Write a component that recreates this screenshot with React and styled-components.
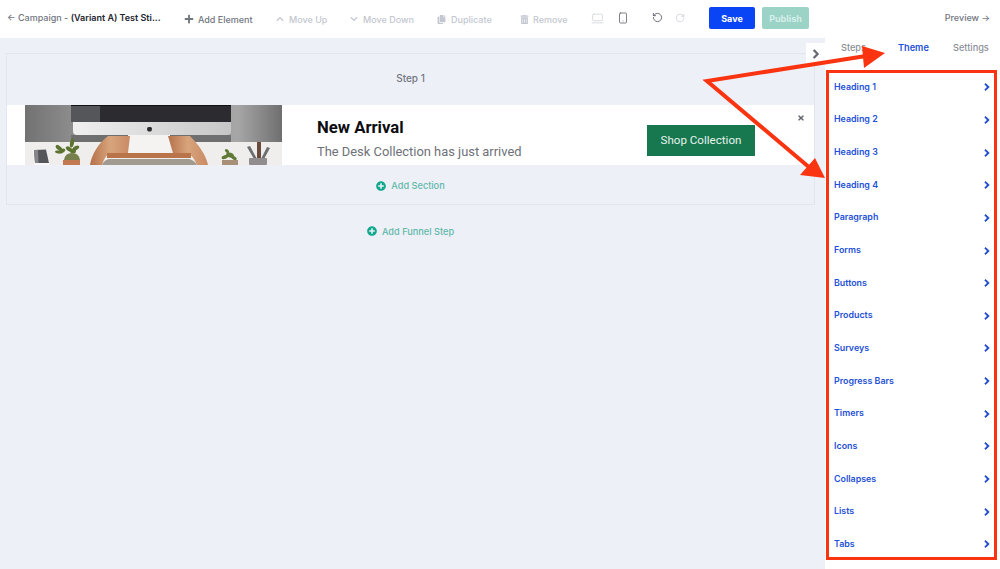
import React from 'react';
import styled, { createGlobalStyle } from 'styled-components';
import { FaPlus, FaChevronUp, FaChevronDown, FaCopy, FaTrashAlt, FaChevronRight, FaTimes, FaPlusCircle } from 'react-icons/fa';
import { LaptopMinimal, Smartphone, RotateCcw, RotateCw } from 'lucide-react';

const GlobalStyle = createGlobalStyle`
  * { box-sizing: border-box; }
  html, body { margin: 0; padding: 0; height: 100%; background: #eef0f8; }
  body { font-family: Inter, "Liberation Sans", sans-serif; }
`;

const Page = styled.div`
  position: relative;
  width: 1000px;
  height: 569px;
  overflow: hidden;
  display: flex;
  flex-direction: column;
`;

const Toolbar = styled.header`
  height: 38px;
  flex: none;
  display: flex;
  align-items: center;
  padding-left: 7px;
  background: #fff;
  font-size: 9px;
  font-weight: 500;
  color: #71767f;
`;

const Title = styled.div`
  width: 177px;
  flex: none;
  font-size: 9px;
  white-space: nowrap;
  padding-bottom: 3px;
  b { font-weight: 600; color: #23262d; }
`;

const Tool = styled.div`
  width: ${p => p.$w}px;
  flex: none;
  display: flex;
  align-items: center;
  gap: ${p => p.$gap ?? 4}px;
  color: ${p => (p.$off ? '#c3c7d0' : '#71767f')};
  white-space: nowrap;
  padding-bottom: ${p => p.$pb ?? 0}px;
`;

const Button = styled.button`
  width: ${p => p.$w}px;
  height: 22px;
  flex: none;
  margin: 0 7px 2px 0;
  padding: 0;
  border: 0;
  border-radius: 2px;
  background: ${p => p.$bg};
  color: ${p => p.$fg};
  font: 700 9px Inter, sans-serif;
`;

const Preview = styled.div`
  margin-left: auto;
  padding: 0 10px 3px 0;
  font-size: 9px;
`;

const Body = styled.div`
  flex: 1;
  display: flex;
  min-height: 0;
`;

const Canvas = styled.main`
  flex: 1;
  padding: 15px 10px 0 6px;
`;

const StepBox = styled.section`
  height: 152px;
  border: 1px solid #e3e5ee;
  display: flex;
  flex-direction: column;
`;

const StepLabel = styled.div`
  height: 51px;
  flex: none;
  padding-top: 18px;
  text-align: center;
  font-size: 10px;
  font-weight: 500;
  color: #72767f;
`;

const Banner = styled.div`
  position: relative;
  height: 60px;
  flex: none;
  display: flex;
  background: #fff;
  padding-left: 18px;
  overflow: hidden;
`;

const BannerCopy = styled.div`
  margin-left: 35px;
  padding-top: 12px;
  width: 330px;
  flex: none;
  font-family: Roboto, sans-serif;
`;

const BannerTitle = styled.div`
  font-size: 16.7px;
  line-height: 22px;
  font-weight: 700;
  color: #0c0d10;
`;

const BannerText = styled.div`
  margin-top: 3px;
  font-size: 12.9px;
  line-height: 20px;
  color: #6e7178;
`;

const ShopButton = styled.button`
  width: 108px;
  height: 31px;
  margin-top: 20px;
  padding: 0 0 2px;
  border: 0;
  background: #17784f;
  color: #e9f3ee;
  font: 400 11.6px Roboto, sans-serif;
`;

const CloseIcon = styled(FaTimes)`
  position: absolute;
  top: 9px;
  right: 9px;
  color: #62656c;
`;

const AddRow = styled.div`
  height: ${p => p.$h}px;
  display: flex;
  align-items: center;
  justify-content: center;
  gap: 5px;
  padding-top: ${p => p.$pt ?? 0}px;
  font-size: 9.2px;
  font-weight: 500;
  color: #5fb8a8;
  svg { color: #12a88c; }
`;

const Sidebar = styled.aside`
  position: relative;
  width: 175px;
  flex: none;
  background: #fff;
`;

const Collapse = styled.div`
  position: absolute;
  top: 5px;
  left: -19px;
  width: 19px;
  height: 22px;
  display: flex;
  align-items: center;
  justify-content: center;
  background: #fff;
  color: #62656c;
  svg { stroke: currentColor; stroke-width: 40; }
`;

const Tabs = styled.nav`
  height: 32px;
  display: flex;
  align-items: flex-start;
  padding-top: 4px;
  font-size: 9.2px;
  font-weight: 500;
  color: #8b8f98;
`;

const Tab = styled.div`
  width: ${p => p.$w}px;
  padding-left: ${p => p.$pl ?? 0}px;
  color: ${p => (p.$active ? '#2350d8' : 'inherit')};
  font-weight: ${p => (p.$active ? 600 : 500)};
`;

const List = styled.ul`
  list-style: none;
  margin: 0;
  padding: 0 9px 0 9px;
`;

const Row = styled.li`
  height: 32.65px;
  display: flex;
  align-items: center;
  justify-content: space-between;
  font-size: 8.9px;
  font-weight: 600;
  color: #2350d8;
  svg { color: #1440c8; margin-top: 2px; stroke: currentColor; stroke-width: 50; }
`;

const Annotations = styled.svg`
  position: absolute;
  inset: 0;
  pointer-events: none;
`;

const Leaves = ({ dots, fill }) => (
  <g fill={fill}>
    {dots.map(([x, y, rx, ry, r], i) => (
      <ellipse key={i} cx={x} cy={y} rx={rx} ry={ry} transform={`rotate(${r} ${x} ${y})`} />
    ))}
  </g>
);

const DeskPhoto = () => (
  <svg width="257" height="60" viewBox="0 0 257 60" style={{ flex: 'none' }}>
    <defs>
      <linearGradient id="wall" x1="0" x2="1" y1="0" y2="0">
        <stop offset="0" stopColor="#727272" />
        <stop offset="0.18" stopColor="#8c8c8c" />
        <stop offset="0.83" stopColor="#a6a6a6" />
        <stop offset="1" stopColor="#6f6f6f" />
      </linearGradient>
      <linearGradient id="wood" x1="0" x2="1" y1="0" y2="0">
        <stop offset="0" stopColor="#b5714a" />
        <stop offset="0.5" stopColor="#d8a47c" />
        <stop offset="1" stopColor="#c98a64" />
      </linearGradient>
      <linearGradient id="chin" x1="0" x2="1" y1="0" y2="0">
        <stop offset="0" stopColor="#f0f0f0" />
        <stop offset="1" stopColor="#c6c6c6" />
      </linearGradient>
    </defs>
    <rect width="257" height="37" fill="url(#wall)" />
    <rect y="30" x="46" width="160" height="7" fill="#6f6f6f" />
    <rect y="37" width="257" height="23" fill="#efeeec" />
    <rect x="103" y="30" width="42" height="19" fill="#f4f3f1" />
    <path d="M83 31H105L103 48H84Q79 53 77 60H65C67 48 74 38 83 31Z" fill="url(#wood)" />
    <path d="M143 31H165C174 40 181 50 183 60H172Q169 53 164 48H148Z" fill="url(#wood)" />
    <rect x="82" y="48" width="84" height="5" fill="#b9744a" />
    <path d="M77 60Q79 55 84 54H164Q169 55 172 60Z" fill="#a09a90" />
    <rect x="46" width="160" height="1.500" fill="#111" />
    <rect x="46" y="1" width="160" height="16" fill="#2c2c30" />
    <rect x="46" y="1" width="29" height="16" fill="#55565a" />
    <path d="M48 17H206V26Q206 30 202 30H52Q48 30 48 26Z" fill="url(#chin)" />
    <path d="M122 24Q122 21.500 124.500 22Q127 21.500 127 23.500Q127 26 125.500 26.500H123.500Q122 26 122 24Z" fill="#2b2b2d" />
    <path d="M8 45L21 44L25 60H9Z" fill="#f8f8f8" />
    <path d="M9 45L21 44.500L24 58H10Z" fill="#55565a" />
    <path d="M9 45L13 45L13.500 58H10Z" fill="#85868a" />
    <Leaves
      fill="#5c7430"
      dots={[
        [34, 43, 4, 2, 40], [37, 46, 3.500, 2, -30], [33, 47, 3, 1.500, 10],
        [47, 38, 2, 4.500, 10], [44, 44, 3.500, 2, 35], [51, 43, 3.500, 2, -30], [48, 46, 3, 2.500, 0],
      ]}
    />
    <path d="M39 55Q40 48 47 48Q54 48 55 55Z" fill="#77804c" />
    <rect x="38" y="55" width="17" height="5" fill="#c37a52" />
    <Leaves
      fill="#5f7a35"
      dots={[[202, 46, 2.500, 1.500, 40], [205, 50, 4, 2.500, 20], [200, 52, 3.500, 1.800, -20], [209, 53, 3, 1.800, 30]]}
    />
    <rect x="197" y="55" width="16" height="5" fill="#a89078" />
    <path d="M222 42L225 41L232 54H229Z" fill="#6c6e70" />
    <path d="M232 37H236L236 54H232Z" fill="#6a4a3c" />
    <path d="M245 43L242 42L236 54H239Z" fill="#6c6e70" />
    <rect x="224" y="53" width="18" height="7" rx="1" fill="#918c8d" />
  </svg>
);

const themeItems = ['Heading 1', 'Heading 2', 'Heading 3', 'Heading 4', 'Paragraph', 'Forms', 'Buttons', 'Products', 'Surveys', 'Progress Bars', 'Timers', 'Icons', 'Collapses', 'Lists', 'Tabs'];

export default function App() {
  return (
    <Page>
      <GlobalStyle />
      <Toolbar>
        <Title>← Campaign - <b>(Variant A) Test Sti...</b></Title>
        <Tool $w={92}><FaPlus size={10} />Add Element</Tool>
        <Tool $w={74} $gap={5} $off><FaChevronUp size={8} />Move Up</Tool>
        <Tool $w={87} $gap={5} $off><FaChevronDown size={8} />Move Down</Tool>
        <Tool $w={83} $gap={5} $off><FaCopy size={9} />Duplicate</Tool>
        <Tool $w={71} $off><FaTrashAlt size={9} />Remove</Tool>
        <Tool $w={28} $off $pb={1}><LaptopMinimal size={13} strokeWidth={1.2} /></Tool>
        <Tool $w={33} $pb={3}><Smartphone size={12} strokeWidth={1.5} color="#55585f" style={{ marginLeft: -2 }} /></Tool>
        <Tool $w={23} $pb={3}><RotateCcw size={11} strokeWidth={1.8} color="#55585f" /></Tool>
        <Tool $w={34} $off $pb={3}><RotateCw size={10} strokeWidth={1.6} /></Tool>
        <Button $w={46} $bg="#0a45f5" $fg="#fff">Save</Button>
        <Button $w={47} $bg="#9bd3c6" $fg="#d6efe9">Publish</Button>
        <Preview>Preview →</Preview>
      </Toolbar>
      <Body>
        <Canvas>
          <StepBox>
            <StepLabel>Step 1</StepLabel>
            <Banner>
              <DeskPhoto />
              <BannerCopy>
                <BannerTitle>New Arrival</BannerTitle>
                <BannerText>The Desk Collection has just arrived</BannerText>
              </BannerCopy>
              <ShopButton>Shop Collection</ShopButton>
              <CloseIcon size={8} />
            </Banner>
            <AddRow $h={39} $pt={2}><FaPlusCircle size={10} />Add Section</AddRow>
          </StepBox>
          <AddRow $h={52}><FaPlusCircle size={10} />Add Funnel Step</AddRow>
        </Canvas>
        <Sidebar>
          <Collapse><FaChevronRight size={10} /></Collapse>
          <Tabs>
            <Tab $w={73} $pl={16}>Steps</Tab>
            <Tab $w={55} $active>Theme</Tab>
            <Tab $w={47}>Settings</Tab>
          </Tabs>
          <List>
            {themeItems.map(item => (
              <Row key={item}>{item}<FaChevronRight size={8} /></Row>
            ))}
          </List>
        </Sidebar>
      </Body>
      <Annotations width="1000" height="569" viewBox="0 0 1000 569">
        <rect x="827.500" y="71.500" width="168" height="487" fill="none" stroke="#fa3410" strokeWidth="3" />
        <path d="M866 56L707 81L810 168" fill="none" stroke="#fa3410" strokeWidth="4" />
        <path d="M885 53L862 46L864 68Z" fill="#fa3410" />
        <path d="M825 178L815 158L800 175Z" fill="#fa3410" />
      </Annotations>
    </Page>
  );
}
